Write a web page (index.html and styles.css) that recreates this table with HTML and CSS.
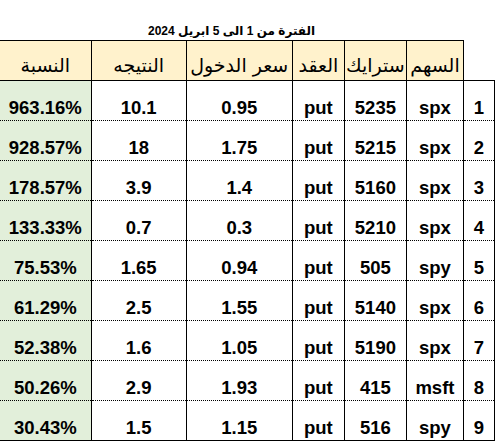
FILE: index.html
```html
<!DOCTYPE html>
<html lang="ar">
<head>
	<meta charset="UTF-8">
	<title>الفترة من 1 الى 5 ابريل 2024</title>
	<link rel="stylesheet" href="styles.css">
</head>
<body>
	<section class="sheet">
		<h1 class="title" dir="rtl">الفترة من 1 الى 5 ابريل 2024</h1>
		<table class="trades" dir="rtl">
			<colgroup>
				<col class="c-num">
				<col class="c-stock">
				<col class="c-strike">
				<col class="c-type">
				<col class="c-entry">
				<col class="c-result">
				<col class="c-pct">
			</colgroup>
			<thead>
				<tr>
					<th class="blank"></th>
					<th class="first">السهم</th>
					<th>سترايك</th>
					<th>العقد</th>
					<th>سعر الدخول</th>
					<th>النتيجه</th>
					<th class="last">النسبة</th>
				</tr>
			</thead>
			<tbody>
				<tr><td>1</td><td>spx</td><td>5235</td><td>put</td><td>0.95</td><td>10.1</td><td class="pct">963.16%</td></tr>
				<tr><td>2</td><td>spx</td><td>5215</td><td>put</td><td>1.75</td><td>18</td><td class="pct">928.57%</td></tr>
				<tr><td>3</td><td>spx</td><td>5160</td><td>put</td><td>1.4</td><td>3.9</td><td class="pct">178.57%</td></tr>
				<tr><td>4</td><td>spx</td><td>5210</td><td>put</td><td>0.3</td><td>0.7</td><td class="pct">133.33%</td></tr>
				<tr><td>5</td><td>spy</td><td>505</td><td>put</td><td>0.94</td><td>1.65</td><td class="pct">75.53%</td></tr>
				<tr><td>6</td><td>spx</td><td>5140</td><td>put</td><td>1.55</td><td>2.5</td><td class="pct">61.29%</td></tr>
				<tr><td>7</td><td>spx</td><td>5190</td><td>put</td><td>1.05</td><td>1.6</td><td class="pct">52.38%</td></tr>
				<tr><td>8</td><td>msft</td><td>415</td><td>put</td><td>1.93</td><td>2.9</td><td class="pct">50.26%</td></tr>
				<tr><td>9</td><td>spy</td><td>516</td><td>put</td><td>1.15</td><td>1.5</td><td class="pct">30.43%</td></tr>
			</tbody>
		</table>
	</section>
</body>
</html>
```

FILE: styles.css
```css
html, body, h1, table {
	margin: 0;
	padding: 0;
}

body {
	background-color: #fff;
	color: #000;
	font-family: "Liberation Sans", "DejaVu Sans", sans-serif;
}

.sheet {
	width: 495px;
}

.title {
	width: 463px;
	height: 40px;
	box-sizing: border-box;
	padding-top: 23px;
	font-size: 12px;
	line-height: 16px;
	font-weight: bold;
	text-align: center;
}

.trades {
	width: 495px;
	table-layout: fixed;
	border-collapse: collapse;
}

.c-num { width: 31px; }
.c-stock { width: 57px; }
.c-strike { width: 62px; }
.c-type { width: 52px; }
.c-entry { width: 106px; }
.c-result { width: 95px; }
.c-pct { width: 91px; }

.trades th {
	height: 40px;
	padding: 0 0 4px;
	box-sizing: border-box;
	background-color: #fff2cc;
	border: 1px solid #000;
	font-family: "DejaVu Sans", sans-serif;
	font-size: 19px;
	font-weight: normal;
	line-height: 22px;
	text-align: center;
	vertical-align: bottom;
}

.trades th.blank {
	background-color: transparent;
	border-top: none;
	border-right: none;
}

.trades th.last {
	border-left: none;
}

.trades td {
	height: 40px;
	padding: 0 0 2px;
	box-sizing: border-box;
	border-left: 1px solid #000;
	border-right: 1px solid #000;
	border-bottom: 1px dotted #000;
	font-size: 18.5px;
	font-weight: bold;
	line-height: 20px;
	text-align: center;
	vertical-align: bottom;
}

.trades td.pct {
	background-color: #e2efda;
	border-left: none;
}

.trades tr:last-child td {
	border-bottom: 1px solid #000;
}
```
